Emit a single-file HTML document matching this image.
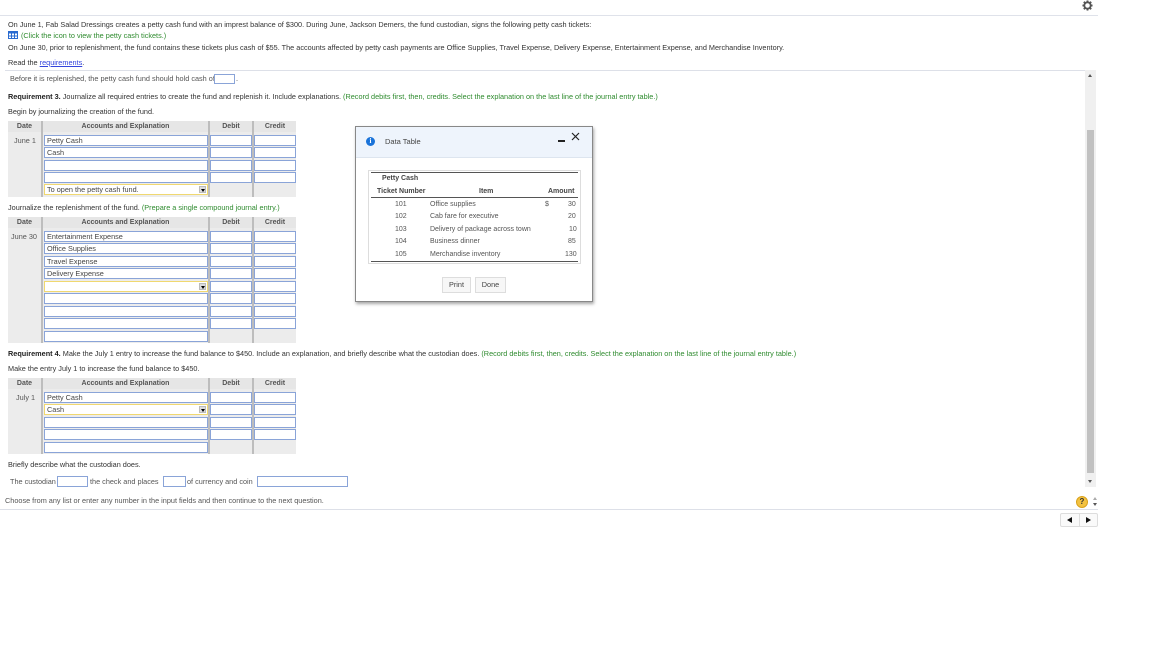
<!DOCTYPE html>
<html><head><meta charset="utf-8">
<style>
*{margin:0;padding:0;box-sizing:border-box}
body{width:1152px;height:648px;background:#fff;position:relative;overflow:hidden;font-family:"Liberation Sans",Arial,sans-serif;font-size:7.3px;color:#333}
.a{position:absolute;white-space:nowrap}
.t{position:absolute;white-space:nowrap;line-height:9px}
.d{font-size:7px}
.g{color:#2e8b2e}
.b{font-weight:bold;color:#222}
.hl{position:absolute;height:1px;background:#dde0e8}
.in{position:absolute;height:11px;border:1px solid #8aa4d8;background:#fff;font-size:7.3px;line-height:9px;padding-left:2px;color:#444}
.y{border-color:#f0d870}
.hd{position:absolute;background:#e6e6e6;font-weight:bold;color:#555;text-align:center;line-height:11px;height:11px;font-size:7px}
.bd{position:absolute;background:#ececec}
.sep{position:absolute;width:2px;background:#bdbdbd}
.dd{position:absolute;right:1px;top:1px;width:7px;height:7px;background:#ddd;border:1px solid #bbb}
.dd:after{content:"";position:absolute;left:1px;top:2px;border-left:2px solid transparent;border-right:2px solid transparent;border-top:3px solid #000}
</style></head><body>
<div class="hl" style="left:0;top:15px;width:1098px;background:#dfe2ea"></div>
<svg class="a" style="left:1082px;top:0px" width="11" height="11" viewBox="0 0 12 12"><circle cx="6" cy="6" r="3.5" fill="none" stroke="#555" stroke-width="2"/><g stroke="#555" stroke-width="2"><line x1="6" y1="0.5" x2="6" y2="2.5"/><line x1="6" y1="9.5" x2="6" y2="11.5"/><line x1="0.5" y1="6" x2="2.5" y2="6"/><line x1="9.5" y1="6" x2="11.5" y2="6"/><line x1="2" y1="2" x2="3.4" y2="3.4"/><line x1="8.6" y1="8.6" x2="10" y2="10"/><line x1="2" y1="10" x2="3.4" y2="8.6"/><line x1="8.6" y1="3.4" x2="10" y2="2"/></g></svg>

<div class="t" style="left:8px;top:20px">On June 1, Fab Salad Dressings creates a petty cash fund with an imprest balance of $300. During June, Jackson Demers, the fund custodian, signs the following petty cash tickets:</div>
<svg class="a" style="left:8px;top:31px" width="10" height="8"><rect x="0.5" y="0.5" width="9" height="7" fill="#fff" stroke="#2a6bd0"/><rect x="0.5" y="0.5" width="9" height="2" fill="#2a6bd0"/><g stroke="#2a6bd0" stroke-width="1"><line x1="3.5" y1="2" x2="3.5" y2="8"/><line x1="6.5" y1="2" x2="6.5" y2="8"/><line x1="0" y1="5" x2="10" y2="5"/></g></svg>
<div class="t g" style="left:21px;top:31px">(Click the icon to view the petty cash tickets.)</div>
<div class="t" style="left:8px;top:43px">On June 30, prior to replenishment, the fund contains these tickets plus cash of $55. The accounts affected by petty cash payments are Office Supplies, Travel Expense, Delivery Expense, Entertainment Expense, and Merchandise Inventory.</div>
<div class="t" style="left:8px;top:58px">Read the <span style="color:#3344dd;text-decoration:underline">requirements</span>.</div>
<div class="hl" style="left:5px;top:70px;width:1080px"></div>
<div class="t" style="left:10px;top:74px;color:#555">Before it is replenished, the petty cash fund should hold cash of</div>
<div class="in" style="left:214px;top:74px;width:21px;height:10px"></div>
<div class="t" style="left:236px;top:74px">.</div>
<div class="t" style="left:8px;top:92px"><span class="b">Requirement 3.</span> Journalize all required entries to create the fund and replenish it. Include explanations. <span class="g">(Record debits first, then, credits. Select the explanation on the last line of the journal entry table.)</span></div>
<div class="t" style="left:8px;top:107px">Begin by journalizing the creation of the fund.</div>

<!-- table 1 -->
<div class="bd" style="left:8px;top:121px;width:288px;height:76px"></div>
<div class="hd" style="left:8px;top:121px;width:33px">Date</div>
<div class="hd" style="left:43px;top:121px;width:165px">Accounts and Explanation</div>
<div class="hd" style="left:210px;top:121px;width:42px">Debit</div>
<div class="hd" style="left:254px;top:121px;width:42px">Credit</div>
<div class="sep" style="left:41px;top:121px;height:76px"></div>
<div class="sep" style="left:208px;top:121px;height:76px"></div>
<div class="sep" style="left:252px;top:121px;height:76px"></div>
<div class="t" style="left:14px;top:136px;color:#555">June 1</div>
<div class="in" style="left:44px;top:135px;width:164px">Petty Cash</div><div class="in" style="left:210px;top:135px;width:42px"></div><div class="in" style="left:254px;top:135px;width:42px"></div>
<div class="in" style="left:44px;top:147px;width:164px">Cash</div><div class="in" style="left:210px;top:147px;width:42px"></div><div class="in" style="left:254px;top:147px;width:42px"></div>
<div class="in" style="left:44px;top:160px;width:164px"></div><div class="in" style="left:210px;top:160px;width:42px"></div><div class="in" style="left:254px;top:160px;width:42px"></div>
<div class="in" style="left:44px;top:172px;width:164px"></div><div class="in" style="left:210px;top:172px;width:42px"></div><div class="in" style="left:254px;top:172px;width:42px"></div>
<div class="in y" style="left:44px;top:184px;width:164px">To open the petty cash fund.<span class="dd"></span></div>

<div class="t" style="left:8px;top:203px">Journalize the replenishment of the fund. <span class="g">(Prepare a single compound journal entry.)</span></div>
<!-- table 2 -->
<div class="bd" style="left:8px;top:217px;width:288px;height:126px"></div>
<div class="hd" style="left:8px;top:217px;width:33px">Date</div>
<div class="hd" style="left:43px;top:217px;width:165px">Accounts and Explanation</div>
<div class="hd" style="left:210px;top:217px;width:42px">Debit</div>
<div class="hd" style="left:254px;top:217px;width:42px">Credit</div>
<div class="sep" style="left:41px;top:217px;height:126px"></div>
<div class="sep" style="left:208px;top:217px;height:126px"></div>
<div class="sep" style="left:252px;top:217px;height:126px"></div>
<div class="t" style="left:11px;top:232px;color:#555">June 30</div>
<div class="in" style="left:44px;top:231px;width:164px">Entertainment Expense</div><div class="in" style="left:210px;top:231px;width:42px"></div><div class="in" style="left:254px;top:231px;width:42px"></div>
<div class="in" style="left:44px;top:243px;width:164px">Office Supplies</div><div class="in" style="left:210px;top:243px;width:42px"></div><div class="in" style="left:254px;top:243px;width:42px"></div>
<div class="in" style="left:44px;top:256px;width:164px">Travel Expense</div><div class="in" style="left:210px;top:256px;width:42px"></div><div class="in" style="left:254px;top:256px;width:42px"></div>
<div class="in" style="left:44px;top:268px;width:164px">Delivery Expense</div><div class="in" style="left:210px;top:268px;width:42px"></div><div class="in" style="left:254px;top:268px;width:42px"></div>
<div class="in y" style="left:44px;top:281px;width:164px"><span class="dd"></span></div><div class="in" style="left:210px;top:281px;width:42px"></div><div class="in" style="left:254px;top:281px;width:42px"></div>
<div class="in" style="left:44px;top:293px;width:164px"></div><div class="in" style="left:210px;top:293px;width:42px"></div><div class="in" style="left:254px;top:293px;width:42px"></div>
<div class="in" style="left:44px;top:306px;width:164px"></div><div class="in" style="left:210px;top:306px;width:42px"></div><div class="in" style="left:254px;top:306px;width:42px"></div>
<div class="in" style="left:44px;top:318px;width:164px"></div><div class="in" style="left:210px;top:318px;width:42px"></div><div class="in" style="left:254px;top:318px;width:42px"></div>
<div class="in" style="left:44px;top:331px;width:164px"></div>

<div class="t" style="left:8px;top:349px"><span class="b">Requirement 4.</span> Make the July 1 entry to increase the fund balance to $450. Include an explanation, and briefly describe what the custodian does. <span class="g">(Record debits first, then, credits. Select the explanation on the last line of the journal entry table.)</span></div>
<div class="t" style="left:8px;top:364px">Make the entry July 1 to increase the fund balance to $450.</div>
<!-- table 3 -->
<div class="bd" style="left:8px;top:378px;width:288px;height:76px"></div>
<div class="hd" style="left:8px;top:378px;width:33px">Date</div>
<div class="hd" style="left:43px;top:378px;width:165px">Accounts and Explanation</div>
<div class="hd" style="left:210px;top:378px;width:42px">Debit</div>
<div class="hd" style="left:254px;top:378px;width:42px">Credit</div>
<div class="sep" style="left:41px;top:378px;height:76px"></div>
<div class="sep" style="left:208px;top:378px;height:76px"></div>
<div class="sep" style="left:252px;top:378px;height:76px"></div>
<div class="t" style="left:16px;top:393px;color:#555">July 1</div>
<div class="in" style="left:44px;top:392px;width:164px">Petty Cash</div><div class="in" style="left:210px;top:392px;width:42px"></div><div class="in" style="left:254px;top:392px;width:42px"></div>
<div class="in y" style="left:44px;top:404px;width:164px">Cash<span class="dd"></span></div><div class="in" style="left:210px;top:404px;width:42px"></div><div class="in" style="left:254px;top:404px;width:42px"></div>
<div class="in" style="left:44px;top:417px;width:164px"></div><div class="in" style="left:210px;top:417px;width:42px"></div><div class="in" style="left:254px;top:417px;width:42px"></div>
<div class="in" style="left:44px;top:429px;width:164px"></div><div class="in" style="left:210px;top:429px;width:42px"></div><div class="in" style="left:254px;top:429px;width:42px"></div>
<div class="in" style="left:44px;top:442px;width:164px"></div>

<div class="t" style="left:8px;top:460px">Briefly describe what the custodian does.</div>
<div class="t" style="left:10px;top:477px;color:#555">The custodian</div>
<div class="in" style="left:57px;top:476px;width:31px"></div>
<div class="t" style="left:90px;top:477px;color:#555">the check and places</div>
<div class="in" style="left:163px;top:476px;width:23px"></div>
<div class="t" style="left:187px;top:477px;color:#555">of currency and coin</div>
<div class="in" style="left:257px;top:476px;width:91px"></div>
<div class="t" style="left:5px;top:496px;color:#555">Choose from any list or enter any number in the input fields and then continue to the next question.</div>
<div class="hl" style="left:0;top:509px;width:1098px"></div>

<!-- scrollbar -->
<div class="a" style="left:1085px;top:70px;width:11px;height:417px;background:#f0f0f0"></div>
<div class="a" style="left:1087px;top:130px;width:7px;height:343px;background:#c1c1c1"></div>
<div class="a" style="left:1088px;top:74px;border-left:2.5px solid transparent;border-right:2.5px solid transparent;border-bottom:3px solid #555"></div>
<div class="a" style="left:1088px;top:480px;border-left:2.5px solid transparent;border-right:2.5px solid transparent;border-top:3px solid #555"></div>

<!-- help -->
<div class="a" style="left:1076px;top:496px;width:12px;height:12px;border-radius:50%;background:#f3c241;border:1px solid #d9a21c;font-weight:bold;font-size:8px;text-align:center;line-height:10px;color:#333">?</div>
<div class="a" style="left:1093px;top:497px;border-left:2px solid transparent;border-right:2px solid transparent;border-bottom:3px solid #aaa"></div>
<div class="a" style="left:1093px;top:503px;border-left:2px solid transparent;border-right:2px solid transparent;border-top:3px solid #555"></div>
<!-- nav -->
<div class="a" style="left:1060px;top:513px;width:38px;height:14px;border:1px solid #ddd;border-radius:2px;background:#fafafa"></div>
<div class="a" style="left:1079px;top:513px;width:1px;height:14px;background:#ddd"></div>
<div class="a" style="left:1067px;top:517px;border-top:3.5px solid transparent;border-bottom:3.5px solid transparent;border-right:5px solid #111"></div>
<div class="a" style="left:1086px;top:517px;border-top:3.5px solid transparent;border-bottom:3.5px solid transparent;border-left:5px solid #111"></div>

<!-- dialog -->
<div class="a" style="left:355px;top:126px;width:238px;height:176px;background:#fff;border:1px solid #888;box-shadow:1px 2px 3px rgba(0,0,0,.35)"></div>
<div class="a" style="left:356px;top:127px;width:236px;height:31px;background:#eef4fc;border-bottom:1px solid #dde5ef"></div>
<div class="a" style="left:366px;top:137px;width:9px;height:9px;border-radius:50%;background:#1a73d9;color:#fff;font-weight:bold;font-size:7px;line-height:9px;text-align:center;font-family:'Liberation Serif',serif">i</div>
<div class="t" style="left:385px;top:137px;font-size:7.5px;color:#444">Data Table</div>
<div class="a" style="left:558px;top:140px;width:7px;height:2px;background:#222"></div>
<svg class="a" style="left:571px;top:132px" width="9" height="9"><path d="M1 1L8 8M8 1L1 8" stroke="#222" stroke-width="1.2"/></svg>
<div class="a" style="left:368px;top:170px;width:213px;height:94px;border:1px solid #ddd"></div>
<div class="a" style="left:371px;top:172px;width:207px;height:1px;background:#555"></div>
<div class="t b d" style="left:382px;top:174px;color:#444">Petty Cash</div>
<div class="t b d" style="left:377px;top:187px;color:#444">Ticket Number</div>
<div class="t b d" style="left:479px;top:187px;color:#444">Item</div>
<div class="t b d" style="left:548px;top:187px;color:#444">Amount</div>
<div class="a" style="left:371px;top:197px;width:207px;height:1px;background:#555"></div>
<div class="t d" style="left:395px;top:200px;color:#555">101</div><div class="t d" style="left:430px;top:200px;color:#555">Office supplies</div><div class="t d" style="left:545px;top:200px;color:#555">$</div><div class="t d" style="left:568px;top:200px;color:#555">30</div>
<div class="t d" style="left:395px;top:212px;color:#555">102</div><div class="t d" style="left:430px;top:212px;color:#555">Cab fare for executive</div><div class="t d" style="left:568px;top:212px;color:#555">20</div>
<div class="t d" style="left:395px;top:225px;color:#555">103</div><div class="t d" style="left:430px;top:225px;color:#555">Delivery of package across town</div><div class="t d" style="left:569px;top:225px;color:#555">10</div>
<div class="t d" style="left:395px;top:237px;color:#555">104</div><div class="t d" style="left:430px;top:237px;color:#555">Business dinner</div><div class="t d" style="left:568px;top:237px;color:#555">85</div>
<div class="t d" style="left:395px;top:250px;color:#555">105</div><div class="t d" style="left:430px;top:250px;color:#555">Merchandise inventory</div><div class="t d" style="left:565px;top:250px;color:#555">130</div>
<div class="a" style="left:371px;top:261px;width:207px;height:1px;background:#555"></div>
<div class="a" style="left:442px;top:277px;width:29px;height:16px;border:1px solid #ddd;background:#f7f7f7;text-align:center;line-height:14px;color:#444">Print</div>
<div class="a" style="left:475px;top:277px;width:31px;height:16px;border:1px solid #ddd;background:#f7f7f7;text-align:center;line-height:14px;color:#444">Done</div>
</body></html>
